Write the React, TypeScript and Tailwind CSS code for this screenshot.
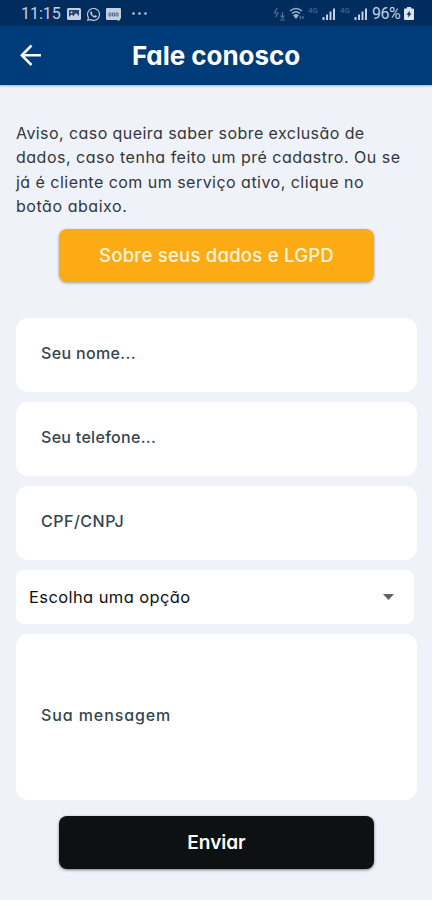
import { FaWhatsapp } from 'react-icons/fa';
import clsx from 'clsx';

const notice = [
  { text: 'Aviso, caso queira saber sobre exclusão de', tracking: 'tracking-[0.430px]' },
  { text: 'dados, caso tenha feito um pré cadastro. Ou se', tracking: 'tracking-[0.500px]' },
  { text: 'já é cliente com um serviço ativo, clique no', tracking: 'tracking-[0.470px]' },
  { text: 'botão abaixo.', tracking: 'tracking-[0.550px]' },
];

function SignalIcon() {
  return (
    <svg viewBox="0 0 14 14" className="h-3.5 w-3.5" fill="#c3d0e2">
      <rect x="0.5" y="10" width="2" height="3" />
      <rect x="4" y="7.5" width="2" height="5.5" />
      <rect x="7.5" y="4.5" width="2" height="8.5" />
      <rect x="11" y="1.5" width="2" height="11.5" />
    </svg>
  );
}

function StatusBar() {
  return (
    <div className="flex h-[26px] items-center justify-between bg-[#002d5d] pl-[21px] pr-[18px] font-['Roboto',sans-serif] text-[#c3d0e2]">
      <div className="flex items-center pt-0.5">
        <span className="w-[46px] text-[16px] leading-none">11:15</span>
        <svg viewBox="0 0 14 12" className="h-3 w-3.5">
          <rect width="14" height="12" rx="1.5" fill="#c3d0e2" />
          <path d="M2 2h10v6l-3-3-2.500 3-2-1.500L2 9z" fill="#24466f" />
          <circle cx="4.500" cy="4.200" r="1" fill="#c3d0e2" />
        </svg>
        <FaWhatsapp className="ml-[5px] h-[15px] w-[15px]" />
        <svg viewBox="0 0 15 13" className="ml-[5px] h-[13px] w-[15px]">
          <path d="M1 0h13a1 1 0 0 1 1 1v9l-2 3-2-1H1a1 1 0 0 1-1-1V1a1 1 0 0 1 1-1z" fill="#c3d0e2" />
          <path d="M3 5v3M3 5h2v3H3M6.500 5h2v3h-2zM10 5h2v3h-2z" stroke="#4f6c90" fill="none" />
        </svg>
        <svg viewBox="0 0 15 3" className="ml-[11px] mb-0.5 h-[3px] w-[15px]" fill="#c3d0e2">
          <circle cx="1.500" cy="1.500" r="1.200" />
          <circle cx="7.500" cy="1.500" r="1.200" />
          <circle cx="13.500" cy="1.500" r="1.200" />
        </svg>
      </div>
      <div className="flex items-center pt-px">
        <svg viewBox="0 0 14 14" className="h-3.5 w-3.5" fill="none" stroke="#4f7094" strokeWidth="1.200">
          <path d="M4 1L1.500 6H5L2.500 10" />
          <path d="M9.500 5v6M7.500 8.500l2 2.500 2-2.500M7 13h5" />
        </svg>
        <svg viewBox="0 0 16 13" className="ml-0.5 h-[13px] w-4" fill="none" stroke="#9bb0c9" strokeWidth="1.400">
          <path d="M1 4q6-5 12 0M3 6.500q4-3.500 8 0" />
          <path d="M5 8.500q2-1.500 4 0L7 11z" fill="#9bb0c9" />
          <path d="M11.500 9v3M14 9v3" stroke="#4f7094" />
        </svg>
        <span className="-mt-1.5 ml-[3px] w-[14px] text-[8px] leading-none text-[#4f7094]">4G</span>
        <SignalIcon />
        <span className="-mt-1.5 ml-1 w-[14px] text-[8px] leading-none text-[#4f7094]">4G</span>
        <SignalIcon />
        <span className="ml-1 w-[32px] text-[16px] leading-none tracking-[-0.5px]">96%</span>
        <svg viewBox="0 0 10 13" className="h-[13px] w-2.5">
          <path d="M3 0h4v1.500h2a1 1 0 0 1 1 1V12a1 1 0 0 1-1 1H1a1 1 0 0 1-1-1V2.500a1 1 0 0 1 1-1h2z" fill="#dbe4ef" />
          <path d="M6 3.500L2.500 7.700h2L4 10.500l3.500-4h-2z" fill="#002d5d" />
        </svg>
      </div>
    </div>
  );
}

function Header() {
  return (
    <header className="relative flex h-[59px] items-center justify-center bg-[#003b7a] shadow-[0_1px_2px_rgba(0,0,0,0.3)]">
      <button type="button" aria-label="Voltar" className="absolute left-5 top-[18px]">
        <svg viewBox="0 0 22 22" className="h-[22px] w-[22px]" fill="none" stroke="#fff" strokeWidth="2.500">
          <path d="M21 11.300H2M11.500 1.500L1.800 11.300l9.700 9.700" />
        </svg>
      </button>
      <h1 className="whitespace-nowrap text-[26px] font-bold leading-none tracking-[-0.050px] text-white">
        Fale conosco
      </h1>
    </header>
  );
}

interface FieldProps {
  label: string;
  tracking: string;
  tall?: boolean;
}

function Field({ label, tracking, tall = false }: FieldProps) {
  return (
    <div
      className={clsx(
        'flex items-center rounded-xl bg-white pb-1 pl-[25px] text-[16px] font-medium leading-none text-[#34454f]',
        tall ? 'h-[166px]' : 'h-[74px]',
        tracking
      )}
    >
      {label}
    </div>
  );
}

export default function App() {
  return (
    <div className="flex h-[900px] w-[432px] flex-col overflow-hidden bg-[#eff3f9] font-['Inter',sans-serif] [font-feature-settings:'cv11']">
      <StatusBar />
      <Header />
      <main className="flex flex-col pl-4 pr-[15px] pt-9">
        <p className="text-[16px] leading-[24.300px] text-[#33363b]">
          {notice.map((line) => (
            <span key={line.text} className={clsx('block whitespace-nowrap', line.tracking)}>
              {line.text}
            </span>
          ))}
        </p>
        <button
          type="button"
          className="ml-[43px] mt-[11px] h-[53px] w-[315px] rounded-lg bg-[#fdab15] text-[18.500px] font-medium leading-none tracking-[0.250px] text-[#fff3d9] shadow-[0_1px_3px_rgba(0,0,0,0.35)]"
        >
          Sobre seus dados e LGPD
        </button>

        <form className="mt-9 flex flex-col">
          <div className="flex flex-col gap-2.5">
            <Field label="Seu nome..." tracking="tracking-[0.350px]" />
            <Field label="Seu telefone..." tracking="tracking-[0.300px]" />
            <Field label="CPF/CNPJ" tracking="tracking-[0.500px]" />
            <div className="mr-[3px] flex h-[54px] items-center justify-between rounded-lg bg-white pl-[13px] pr-5 text-[16.500px] leading-none tracking-[0.400px] text-[#111]">
              <span>Escolha uma opção</span>
              <svg viewBox="0 0 11 6" className="h-1.5 w-[11px]" fill="#616161">
                <path d="M0 0h11L5.500 6z" />
              </svg>
            </div>
            <Field label="Sua mensagem" tracking="tracking-[0.900px]" tall />
          </div>
          <button
            type="button"
            className="ml-[43px] mt-4 h-[53px] w-[315px] rounded-lg bg-[#0e1112] text-[19px] font-semibold leading-none text-white shadow-[0_1px_3px_rgba(0,0,0,0.5)]"
          >
            Enviar
          </button>
        </form>
      </main>
    </div>
  );
}
